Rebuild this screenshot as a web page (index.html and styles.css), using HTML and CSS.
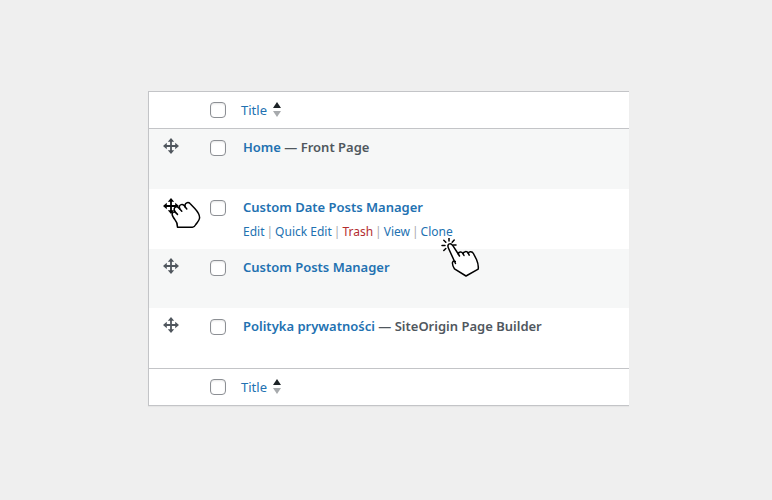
FILE: index.html
```
<!DOCTYPE html>
<html lang="en">
<head>
<meta charset="utf-8">
<title>Pages</title>
<link rel="stylesheet" href="styles.css">
</head>
<body>
<svg class="defs" aria-hidden="true">
  <symbol id="move" viewBox="0 0 16 16">
    <path d="M8 2v12M2 8h12" fill="none" stroke="currentColor" stroke-width="1.800"/>
    <path d="M8 0l3.200 3.800H4.800zM8 16l3.200-3.800H4.800zM0 8l3.800-3.200v6.400zM16 8l-3.800-3.200v6.400z" fill="currentColor"/>
  </symbol>
</svg>
<main class="page">
  <table class="list">
    <thead>
      <tr>
        <th class="handle"></th>
        <th class="check"><input type="checkbox" aria-label="Select all"></th>
        <th class="title"><a class="sort" href="#">Title <svg class="arrows" viewBox="0 0 8 16" aria-hidden="true"><path class="up" d="M4 0l4 6H0z"/><path class="down" d="M4 15l4-6H0z"/></svg></a></th>
      </tr>
    </thead>
    <tbody>
      <tr>
        <td class="handle"><svg class="move"><use href="#move"/></svg></td>
        <td class="check"><input type="checkbox" aria-label="Select Home"></td>
        <td class="title"><strong><a href="#">Home</a> — Front Page</strong></td>
      </tr>
      <tr>
        <td class="handle active"><svg class="move"><use href="#move"/></svg>
          <svg class="grab" viewBox="0 0 30 28" aria-hidden="true"><path d="M6.500 26.200C6.500 23 6 21 4 18.800C2.200 16.500 .8 14.500 1.200 12.800C1.500 11 3 10.600 4.500 11.400L3.400 9.500C2.600 7 4.500 5 6.800 6.200L8.800 8L8.300 6C8.500 3.400 11.500 2.800 13 4.400L14.200 6L14 4C14.500 1.400 17.500 .8 19 2.600L23.800 7.500C27 11 28.800 13.500 28.600 17C28.200 20 26 21.500 24.800 23.500C24 25 23 26.200 21.500 26.200Z"/><path d="M4.500 11.400l2 2M8.800 8l2 2.200M14.200 6l1.600 2"/></svg>
        </td>
        <td class="check"><input type="checkbox" aria-label="Select Custom Date Posts Manager"></td>
        <td class="title"><strong><a href="#">Custom Date Posts Manager</a></strong>
          <div class="actions"><a href="#">Edit</a><i>|</i><a href="#">Quick Edit</a><i>|</i><a class="trash" href="#">Trash</a><i>|</i><a href="#">View</a><i>|</i><span class="clone"><a href="#">Clone</a><svg class="point" viewBox="0 0 40 40" aria-hidden="true"><path d="M14.500 25.500L7.500 10.300C6.400 7.800 7 6.200 8.600 5.800C10 5.400 11 6.300 12 7.800L17.300 16C17.500 13.800 20.500 13 22 15.600C22.600 13.300 26 12.800 27.200 15.200C28.200 13.100 31.300 13.400 32.400 15.500L35.500 21.500C37 25 37.800 27 37.200 31.200L25 38L13.500 30.800C11.800 28 11 26 11.600 24.300C12.200 22.800 13.500 22.600 14.300 23.500"/><path d="M17.300 16l1.200 2M22 15.600l1 1.900M27.200 15.200l1 2M8 0v3M2.800 2.300l2 2M1 7.500h3M2.800 12.500l2-2M13.200 2l-2 2.200M12.500 7h2.500"/></svg></span></div>
        </td>
      </tr>
      <tr>
        <td class="handle"><svg class="move"><use href="#move"/></svg></td>
        <td class="check"><input type="checkbox" aria-label="Select Custom Posts Manager"></td>
        <td class="title"><strong><a href="#">Custom Posts Manager</a></strong></td>
      </tr>
      <tr>
        <td class="handle"><svg class="move"><use href="#move"/></svg></td>
        <td class="check"><input type="checkbox" aria-label="Select Polityka prywatności"></td>
        <td class="title"><strong><a href="#">Polityka prywatności</a> — SiteOrigin Page Builder</strong></td>
      </tr>
    </tbody>
    <tfoot>
      <tr>
        <th class="handle"></th>
        <th class="check"><input type="checkbox" aria-label="Select all"></th>
        <th class="title"><a class="sort" href="#">Title <svg class="arrows" viewBox="0 0 8 16" aria-hidden="true"><path class="up" d="M4 0l4 6H0z"/><path class="down" d="M4 15l4-6H0z"/></svg></a></th>
      </tr>
    </tfoot>
  </table>
</main>
</body>
</html>
```
FILE: styles.css
```
* { box-sizing: border-box; }
body {
  margin: 0;
  background: #efefef;
  color: #50575e;
  font: 13px/20px "Noto Sans", "Open Sans", sans-serif;
}
.defs { position: absolute; width: 0; height: 0; }
.page { padding: 91px 143px 91px 148px; }
.list {
  width: 100%;
  table-layout: fixed;
  border: 1px solid #c3c4c7;
  border-right: 0;
  border-spacing: 0;
  background: #fff;
  box-shadow: 0 1px 1px rgba(0, 0, 0, .04);
}
th, td { padding: 0; text-align: left; vertical-align: top; }
th { height: 37px; font-weight: 400; vertical-align: middle; }
thead th { border-bottom: 1px solid #c3c4c7; }
tfoot th { border-top: 1px solid #c3c4c7; }
td { height: 60px; padding-top: 8px; }
tbody tr:nth-child(3) td { height: 59px; }
tbody tr:nth-child(odd) { background: #f6f7f7; }
.handle { width: 61px; padding-left: 14px; }
.check { width: 31px; }
td.title { padding-left: 2px; }
a { color: #2271b1; text-decoration: none; }
strong { display: block; font-weight: 600; }
input {
  display: block;
  appearance: none;
  width: 16px;
  height: 16px;
  margin: 0;
  border: 1px solid #8c8f94;
  border-radius: 4px;
  background: #fff;
  box-shadow: inset 0 1px 2px rgba(0, 0, 0, .1);
}
input:checked { background: #2271b1; }
td input { margin-top: 3px; }
.sort { display: flex; align-items: center; gap: 6px; }
.arrows { width: 8px; height: 16px; }
.up { fill: #1d2327; }
.down { fill: #a7aaad; }
.move { display: block; width: 16px; height: 16px; margin-top: 1px; }
.active { position: relative; color: #000; }
.grab, .point {
  position: absolute;
  fill: #fff;
  stroke: #000;
  stroke-width: 1.5;
  stroke-linejoin: round;
  stroke-linecap: round;
}
.grab { left: 22px; top: 12px; width: 30px; height: 28px; }
.actions { display: flex; margin-top: 5px; margin-bottom: -2px; font-size: 12px; }
.actions i { padding: 0 2px; font-style: normal; color: #a7aaad; }
.actions .trash { color: #b32d2e; }
.clone { position: relative; }
.point { left: 20px; top: 16px; width: 40px; height: 40px; z-index: 1; }
```
